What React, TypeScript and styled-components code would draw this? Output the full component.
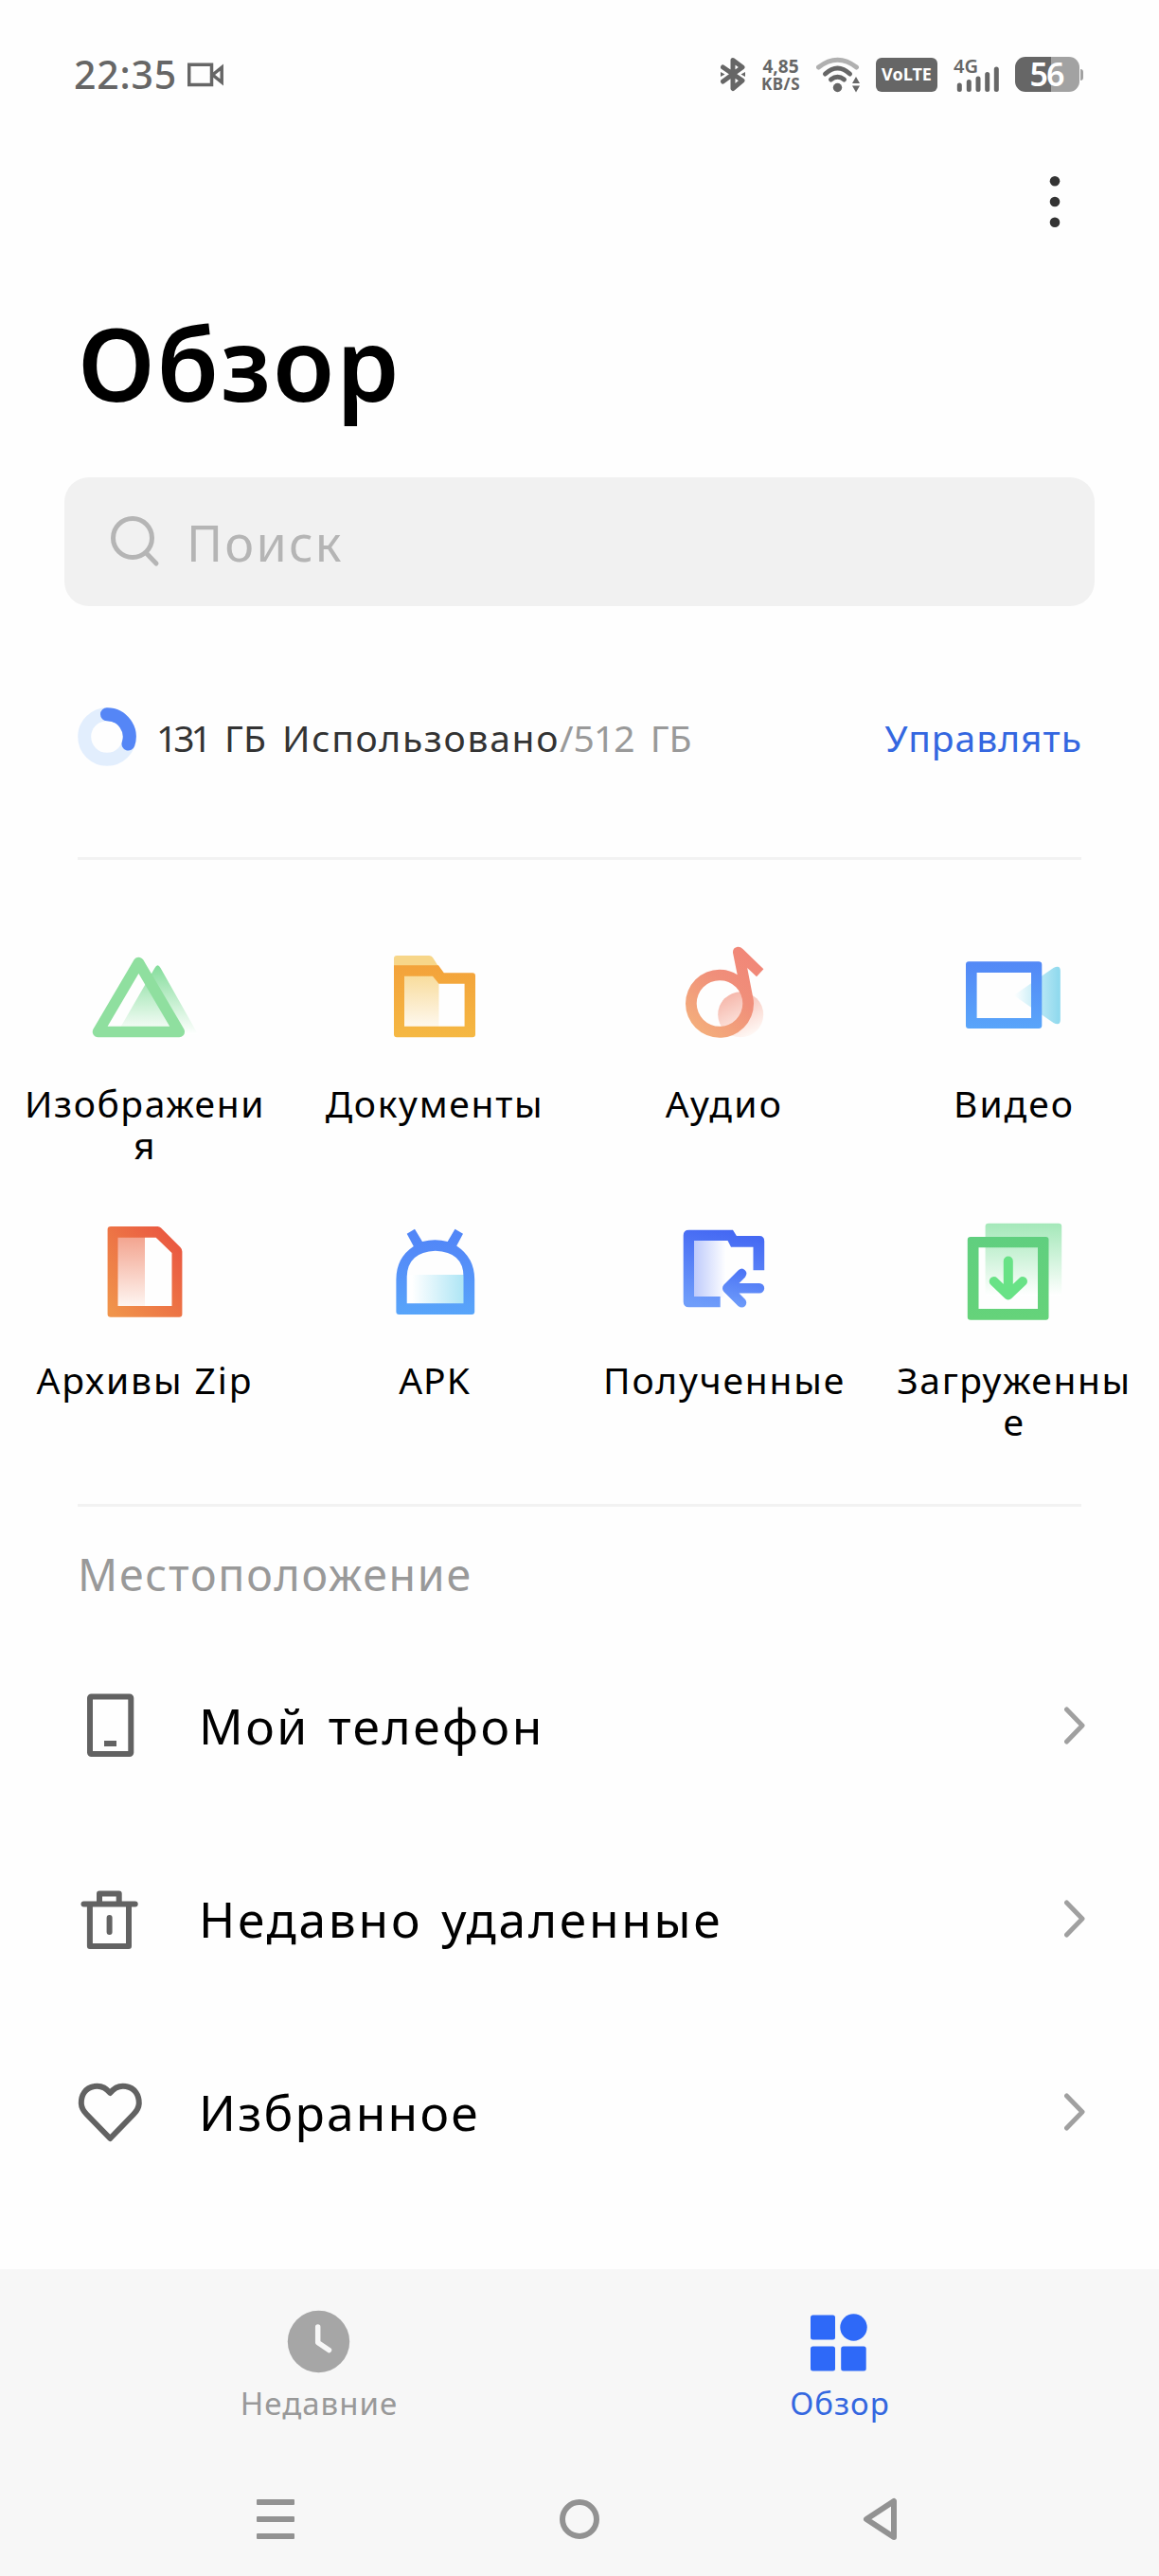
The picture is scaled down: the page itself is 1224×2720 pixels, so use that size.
import type { ReactNode } from "react";
import styled, { createGlobalStyle } from "styled-components";

const categories: { label: string; icon: ReactNode; spacing: number }[] = [
  {
    label: "Изображения",
    spacing: 1.6,
    icon: (
      <>
        <defs>
          <linearGradient id="img-back" x1="0" y1="0" x2="0" y2="1">
            <stop offset="0" stopColor="#84dd9b" />
            <stop offset="1" stopColor="#ffffff" />
          </linearGradient>
        </defs>
        <path d="M70.5 24Q73.5 18.500 76.500 24L116 94H30Z" fill="url(#img-back)" />
        <path
          d="M53.400 18.500L10.500 91.500H96.300Z"
          fill="none"
          stroke="#8fdf9f"
          strokeWidth="11.500"
          strokeLinejoin="round"
        />
      </>
    ),
  },
  {
    label: "Документы",
    spacing: 1.7,
    icon: (
      <>
        <defs>
          <linearGradient id="doc-main" x1="0" y1="0" x2="0" y2="1">
            <stop offset="0" stopColor="#f3a23a" />
            <stop offset="1" stopColor="#f5b843" />
          </linearGradient>
          <linearGradient id="doc-fill" x1="0" y1="0" x2="0" y2="1">
            <stop offset="0" stopColor="#f8dc9c" />
            <stop offset="1" stopColor="#fef8ee" />
          </linearGradient>
        </defs>
        <path d="M17 24V14Q17 11 20 11H54Q56.500 11 58 13L65 24Z" fill="#f7d689" />
        <path d="M28 32H58L64.500 41V86H28Z" fill="url(#doc-fill)" />
        <path
          d="M17 21.300H64L69.800 29.300H100Q103 29.300 103 32.300V94.300Q103 97.300 100 97.300H20Q17 97.300 17 94.300ZM28 32.700V85.700H91.600V40.700H64.300L58 32.700Z"
          fill="url(#doc-main)"
          fillRule="evenodd"
        />
      </>
    ),
  },
  {
    label: "Аудио",
    spacing: 2.3,
    icon: (
      <>
        <defs>
          <linearGradient
            id="audio-main"
            gradientUnits="userSpaceOnUse"
            x1="90"
            y1="15"
            x2="25"
            y2="90"
          >
            <stop offset="0" stopColor="#f18778" />
            <stop offset="0.4" stopColor="#f08f7a" />
            <stop offset="1" stopColor="#f4b07c" />
          </linearGradient>
          <linearGradient id="audio-dot" x1="0.200" y1="0" x2="0.700" y2="1">
            <stop offset="0" stopColor="#f5b3a6" />
            <stop offset="1" stopColor="#fffaf7" />
          </linearGradient>
        </defs>
        <circle cx="77.200" cy="73.300" r="24" fill="url(#audio-dot)" />
        <path
          d="M55 25.700A36 36 0 0 1 73.700 31.300L69 8Q68.600 2.500 74 1.700Q77 1.500 79.500 4L101.400 25.300L94 33.300L84.200 24L90 54Q91 58 91 61.500A36 36 0 1 1 55 25.700ZM55 37.200A24.300 24.300 0 1 0 55 85.800A24.300 24.300 0 1 0 55 37.200Z"
          fill="url(#audio-main)"
          fillRule="evenodd"
        />
      </>
    ),
  },
  {
    label: "Видео",
    spacing: 2,
    icon: (
      <>
        <defs>
          <linearGradient id="video-main" x1="0" y1="0" x2="0" y2="1">
            <stop offset="0" stopColor="#5388f6" />
            <stop offset="1" stopColor="#59a5fa" />
          </linearGradient>
          <linearGradient id="video-lens" x1="0" y1="0" x2="1" y2="0">
            <stop offset="0" stopColor="#ffffff" />
            <stop offset="0.500" stopColor="#c0ebf6" />
            <stop offset="1" stopColor="#8dd8ed" />
          </linearGradient>
        </defs>
        <path
          d="M59.600 53L101.500 24Q108.800 20.500 108.800 27V79Q108.800 85.500 101.500 82Z"
          fill="url(#video-lens)"
        />
        <path
          d="M12 17.300H86Q89.300 17.300 89.300 20.500V85Q89.300 88 86 88H12Q9 88 9 85V20.500Q9 17.300 12 17.300ZM20.600 29V77H78V29Z"
          fill="url(#video-main)"
          fillRule="evenodd"
        />
      </>
    ),
  },
  {
    label: "Архивы Zip",
    spacing: 1.9,
    icon: (
      <>
        <defs>
          <linearGradient id="zip-main" x1="0.900" y1="0.200" x2="0.100" y2="1">
            <stop offset="0" stopColor="#ea5a41" />
            <stop offset="1" stopColor="#f0944b" />
          </linearGradient>
          <linearGradient id="zip-fill" x1="0" y1="0" x2="0" y2="1">
            <stop offset="0" stopColor="#f3a48f" />
            <stop offset="1" stopColor="#fef6f2" />
          </linearGradient>
        </defs>
        <path d="M31 16H60V90H31Z" fill="url(#zip-fill)" />
        <path
          d="M24 5H73.500Q75.500 5 77 6.500L97.500 27Q99.400 29 99.400 31.500V97.500Q99.400 100.700 96.200 100.700H24Q20.600 100.700 20.600 97.500V8Q20.600 5 24 5ZM31.500 16.700V89H88.500V33L71.700 16.700Z"
          fill="url(#zip-main)"
          fillRule="evenodd"
        />
      </>
    ),
  },
  {
    label: "APK",
    spacing: 1,
    icon: (
      <>
        <defs>
          <linearGradient id="apk-main" x1="0" y1="0" x2="0" y2="1">
            <stop offset="0" stopColor="#5085f7" />
            <stop offset="0.300" stopColor="#548bf8" />
            <stop offset="1" stopColor="#58a5fa" />
          </linearGradient>
          <linearGradient id="apk-fill" x1="0" y1="0" x2="1" y2="0">
            <stop offset="0.100" stopColor="#ffffff" />
            <stop offset="1" stopColor="#ade5f5" />
          </linearGradient>
        </defs>
        <path d="M30 56H91V87H30Z" fill="url(#apk-fill)" />
        <path
          d="M39 7.700L30.700 12.700L37.800 26Q19.400 38 19.400 61V95Q19.400 98 22.400 98H99.200Q102.200 98 102.200 95V61Q102.200 38 83.200 25.500L90 12.700L81.500 7.700L73.700 21Q60.500 17.500 47 21ZM60.800 30.700Q90.500 32 90.500 58V86.300H30.700V58Q31.500 32 60.800 30.700Z"
          fill="url(#apk-main)"
          fillRule="evenodd"
        />
      </>
    ),
  },
  {
    label: "Полученные",
    spacing: 1.8,
    icon: (
      <>
        <defs>
          <linearGradient
            id="inbox-main"
            gradientUnits="userSpaceOnUse"
            x1="60"
            y1="8"
            x2="45"
            y2="90"
          >
            <stop offset="0" stopColor="#4468f3" />
            <stop offset="1" stopColor="#6f9dfa" />
          </linearGradient>
          <linearGradient id="inbox-arrow" x1="0.500" y1="0" x2="0.300" y2="1">
            <stop offset="0" stopColor="#4a72f5" />
            <stop offset="1" stopColor="#6f9dfa" />
          </linearGradient>
          <linearGradient id="inbox-fill" x1="0" y1="0" x2="1" y2="0">
            <stop offset="0" stopColor="#bcc9fb" />
            <stop offset="1" stopColor="#ffffff" />
          </linearGradient>
        </defs>
        <path d="M27 19H62V80H27Z" fill="url(#inbox-fill)" />
        <path
          d="M22.500 8.700H69L72.900 15H97Q102.200 15 102.200 20.500V51.300H90.500V26.700H67L63.500 20H28V79H55.700V90.300H22.500Q16.700 90.300 16.700 84.500V14.500Q16.700 8.700 22.500 8.700Z"
          fill="url(#inbox-main)"
        />
        <path
          d="M78.800 49.500Q82.500 50.500 83.400 54Q83.500 56.500 82 58.500L75.500 65H97A5.200 5.200 0 0 1 97 75.400H75.500L82 82Q84.500 85.500 82 89Q78.500 92 74.500 89L59.500 74Q56.500 70.200 59.500 66.500L74.500 51.500Q76.500 49.500 78.800 49.500Z"
          fill="url(#inbox-arrow)"
        />
      </>
    ),
  },
  {
    label: "Загруженные",
    spacing: 1.6,
    icon: (
      <>
        <defs>
          <linearGradient id="dl-back" x1="0" y1="0" x2="0" y2="1">
            <stop offset="0" stopColor="#a4e8b9" />
            <stop offset="1" stopColor="#ffffff" />
          </linearGradient>
          <linearGradient id="dl-main" x1="0" y1="0" x2="0" y2="1">
            <stop offset="0" stopColor="#60cf7f" />
            <stop offset="1" stopColor="#65d37a" />
          </linearGradient>
        </defs>
        <path
          d="M29.600 78V5Q29.600 1.700 33 1.700H107Q110.200 1.700 110.200 5V78Z"
          fill="url(#dl-back)"
        />
        <path
          d="M14 16H93.500Q96.500 16 96.500 19V100.700Q96.500 103.700 93.500 103.700H14Q10.800 103.700 10.800 100.700V19Q10.800 16 14 16ZM22.500 27.300V92H85V27.300Z"
          fill="url(#dl-main)"
          fillRule="evenodd"
        />
        <path
          d="M53.800 41.500V75M38.700 63L53.800 77.500L69 63"
          fill="none"
          stroke="#68e286"
          strokeWidth="10"
          strokeLinecap="round"
          strokeLinejoin="round"
        />
      </>
    ),
  },
];

// every icon is drawn in a 68x70 box
const locations = [
  {
    label: "Мой телефон",
    spacing: 2.5,
    icon: (
      <>
        <rect x="13" y="4.500" width="43.300" height="60.500" rx="1.500" />
        <path d="M28 54H41" />
      </>
    ),
  },
  {
    label: "Недавно удаленные",
    spacing: 2.7,
    icon: (
      <>
        <path d="M6.500 19.400H60.700" strokeLinecap="round" />
        <path d="M23 19V8.600H43.700V19" />
        <path d="M12.900 20V64H54V20" />
        <path d="M33.600 34V49" strokeLinecap="round" />
      </>
    ),
  },
  {
    label: "Избранное",
    spacing: 2.2,
    icon: (
      <path d="M34.300 15C29.500 9 23 7 17.500 8C8 9.500 3.500 17.500 3.800 26C4 31 6.500 34.500 9.500 37.500L34.300 63L59 37.500C62 34.500 64.500 31 64.800 26C65 17.500 60.500 9.500 51 8C45.500 7 39 9 34.300 15Z" />
    ),
  },
];

const App = () => {
  return (
    <Screen>
      <GlobalStyle />
      <StatusBar>
        <Clock>22:35</Clock>
        <svg width="40" height="26" viewBox="0 0 40 26" fill="none" stroke="#666" strokeWidth="3.500">
          <path d="M1.700 2.200H25.500V23.500H1.700ZM26.500 13L36.200 5.200V20.800Z" />
        </svg>
        <StatusIcons>
          <svg width="26" height="37" viewBox="0 0 26 37" fill="none" stroke="#666">
            <path
              d="M2.500 11L23 25L13 33.500V3.500L23 11L2.500 26"
              strokeWidth="5"
              strokeLinecap="round"
              strokeLinejoin="round"
            />
            <path d="M0 16L4.500 18.500L0 21ZM26 16L21.500 18.500L26 21Z" fill="#666" stroke="none" />
          </svg>
          <NetSpeed>
            <span>4,85</span>
            <small>KB/S</small>
          </NetSpeed>
          <svg width="46" height="38" viewBox="0 0 46 38" fill="none" strokeLinecap="round">
            <path d="M2.500 11Q22.500-4.500 42.500 11" stroke="#b0b0b0" strokeWidth="5" />
            <path d="M9.500 18Q22.500 6 35.500 18" stroke="#666" strokeWidth="5" />
            <path d="M15.500 24Q22.500 18.500 29.500 24" stroke="#666" strokeWidth="5" />
            <circle cx="22.500" cy="32.500" r="4.700" fill="#666" />
            <path d="M42 21L46 28H38ZM42 37.500L46 30.500H38Z" fill="#666" />
          </svg>
          <Volte>VoLTE</Volte>
          <svg width="48" height="50" viewBox="0 -6 48 50">
            <SignalText x="0" y="17">
              4G
            </SignalText>
            <path
              d="M6.300 30V34.500M16.300 26.500V34.500M26 23V34.500M35.700 18.500V34.500M45.300 13V34.500"
              stroke="#666"
              strokeWidth="5"
              strokeLinecap="round"
            />
          </svg>
          <Battery>
            <BatteryBody>56</BatteryBody>
            <BatteryTip />
          </Battery>
        </StatusIcons>
      </StatusBar>

      <MenuBar>
        <svg width="12" height="56" viewBox="0 0 12 56" fill="#333">
          <circle cx="6" cy="6.300" r="5.300" />
          <circle cx="6" cy="28" r="5.300" />
          <circle cx="6" cy="49.700" r="5.300" />
        </svg>
      </MenuBar>

      <Title>Обзор</Title>

      <Search>
        <svg
          width="52"
          height="54"
          viewBox="0 0 52 54"
          fill="none"
          stroke="#b5b5b5"
          strokeWidth="5"
          strokeLinecap="round"
        >
          <circle cx="23" cy="23" r="20.500" />
          <path d="M37.500 39L48 50" />
        </svg>
        <SearchText>Поиск</SearchText>
      </Search>

      <Storage>
        <svg width="62" height="62" viewBox="0 0 62 62" fill="none" strokeWidth="14">
          <circle cx="31" cy="31" r="23.800" stroke="#e2eefd" />
          <path d="M31 7.200A23.800 23.800 0 0 1 53.500 38.500" stroke="#5586f6" strokeLinecap="round" />
        </svg>
        <Usage>
          <Digits $spacing={-4}>131</Digits> ГБ <Used>Использовано</Used>
          <Total>
            /<Digits $spacing={-1}>512</Digits> ГБ
          </Total>
        </Usage>
        <Manage>Управлять</Manage>
      </Storage>

      <Divider />

      <Grid>
        {categories.map(({ label, icon, spacing }) => (
          <Category key={label}>
            <svg width="120" height="104" viewBox="0 0 120 104">
              {icon}
            </svg>
            <CategoryLabel $spacing={spacing}>{label}</CategoryLabel>
          </Category>
        ))}
      </Grid>

      <Divider />

      <SectionTitle>Местоположение</SectionTitle>

      {locations.map(({ label, icon, spacing }) => (
        <Location key={label}>
          <svg
            width="68"
            height="70"
            viewBox="0 0 68 70"
            fill="none"
            stroke="#626262"
            strokeWidth="6"
            strokeLinejoin="round"
          >
            {icon}
          </svg>
          <LocationName $spacing={spacing}>{label}</LocationName>
          <svg
            width="22"
            height="40"
            viewBox="0 0 22 40"
            fill="none"
            stroke="#a0a0a0"
            strokeWidth="5"
            strokeLinecap="round"
            strokeLinejoin="round"
          >
            <path d="M2.500 3L19 20L2.500 37" />
          </svg>
        </Location>
      ))}

      <Footer>
        <Tabs>
          <Tab>
            <svg width="70" height="68" viewBox="-1 -0.500 70 68">
              <circle cx="33.500" cy="34" r="32.700" fill="#a6a6a6" />
              <path
                d="M32.700 18.500V35L44.500 43"
                fill="none"
                stroke="#f7f7f7"
                strokeWidth="5.500"
                strokeLinecap="round"
                strokeLinejoin="round"
              />
            </svg>
            <TabLabel>Недавние</TabLabel>
          </Tab>
          <Tab>
            <svg width="70" height="68" viewBox="-1 -0.500 70 68" fill="#2e69f8">
              <rect x="3" y="6" width="26" height="26" rx="2.500" />
              <circle cx="48.500" cy="19" r="14.200" />
              <rect x="3" y="39" width="26" height="26" rx="2.500" />
              <rect x="35.200" y="39" width="26.500" height="26" rx="2.500" />
            </svg>
            <TabLabel $active>Обзор</TabLabel>
          </Tab>
        </Tabs>
        <SystemNav>
          <svg width="42" height="42" viewBox="0 0 42 42" fill="#929292">
            <rect x="0" y="0" width="40" height="6" rx="1" />
            <rect x="0" y="18" width="40" height="6" rx="1" />
            <rect x="0" y="36" width="40" height="6" rx="1" />
          </svg>
          <svg width="42" height="42" viewBox="0 0 42 42" fill="none" stroke="#929292" strokeWidth="6">
            <circle cx="21" cy="21" r="18" />
          </svg>
          <svg
            width="42"
            height="46"
            viewBox="0 0 42 46"
            fill="none"
            stroke="#929292"
            strokeWidth="6"
            strokeLinejoin="round"
          >
            <path d="M33 4V42L4 23Z" />
          </svg>
        </SystemNav>
      </Footer>
    </Screen>
  );
};

const GlobalStyle = createGlobalStyle`
  body {
    margin: 0;
    background: #fefefe;
  }

  svg {
    display: block;
    flex-shrink: 0;
  }
`;

const Screen = styled.div`
  display: flex;
  flex-direction: column;
  width: 1224px;
  height: 2720px;
  background: #fefefe;
  color: #000;
  font-family: "Noto Sans", "Open Sans", sans-serif;
  white-space: nowrap;
`;

const StatusBar = styled.div`
  display: flex;
  align-items: center;
  height: 157px;
  padding: 0 80px 0 78px;
  color: #666;
`;

const Clock = styled.span`
  width: 120px;
  margin-top: -2px;
  font-size: 41px;
  font-weight: 500;
  letter-spacing: 0.8px;
`;

const StatusIcons = styled.div`
  display: flex;
  align-items: center;
  gap: 17px;
  margin-left: auto;
`;

const NetSpeed = styled.div`
  display: flex;
  flex-direction: column;
  align-items: center;
  width: 41px;
  font-size: 19px;
  font-weight: 700;
  line-height: 19px;

  small {
    font-size: 17px;
    line-height: 17px;
    letter-spacing: 0.5px;
  }
`;

const Volte = styled.span`
  width: 65px;
  height: 36px;
  border-radius: 6px;
  background: #666;
  color: #fff;
  font-size: 18px;
  font-weight: 700;
  line-height: 35px;
  text-align: center;
`;

const SignalText = styled.text`
  fill: #666;
  font-size: 20px;
  font-weight: 600;
`;

const Battery = styled.div`
  display: flex;
  align-items: center;
  gap: 1px;
`;

const BatteryBody = styled.div`
  width: 68px;
  height: 37px;
  border-radius: 11px;
  background: linear-gradient(90deg, #666 56%, #a2a2a2 56%);
  color: #fff;
  font-size: 34px;
  font-weight: 600;
  line-height: 36px;
  letter-spacing: -2px;
  text-indent: -2px;
  text-align: center;
`;

const BatteryTip = styled.div`
  width: 3px;
  height: 12px;
  border-radius: 0 3px 3px 0;
  background: #a2a2a2;
`;

const MenuBar = styled.div`
  display: flex;
  align-items: center;
  justify-content: flex-end;
  height: 112px;
  padding-right: 104px;
`;

const Title = styled.h1`
  margin: 54px 0 0 82px;
  font-size: 106px;
  font-weight: 600;
  line-height: 120px;
  letter-spacing: 2px;
`;

const Search = styled.div`
  display: flex;
  align-items: center;
  height: 136px;
  margin: 61px 68px 0;
  padding-left: 49px;
  border-radius: 26px;
  background: #f1f1f1;
`;

const SearchText = styled.span`
  margin-left: 28px;
  color: #b5b5b5;
  font-size: 52px;
  letter-spacing: 2.2px;
`;

const Storage = styled.div`
  display: flex;
  align-items: center;
  height: 62px;
  margin: 107px 81px 0 82px;
`;

const Usage = styled.span`
  margin-left: 21px;
  color: #333;
  font-size: 39px;
  word-spacing: 7px;
`;

const Digits = styled.span<{ $spacing: number }>`
  letter-spacing: ${({ $spacing }) => $spacing}px;
`;

const Used = styled.span`
  letter-spacing: 1.7px;
`;

const Total = styled.span`
  color: #999;
`;

const Manage = styled.span`
  margin-left: auto;
  color: #3467e0;
  font-size: 39px;
  letter-spacing: 1px;
`;

const Divider = styled.div`
  height: 3px;
  margin: 96px 82px 0;
  background: #f2f2f2;
`;

const Grid = styled.div`
  display: grid;
  grid-template-columns: repeat(4, 306px);
  grid-auto-rows: 292px;
  padding-top: 90px;

  & + ${Divider} {
    margin-top: 6px;
  }
`;

const Category = styled.div`
  display: flex;
  flex-direction: column;
  align-items: center;
`;

const CategoryLabel = styled.span<{ $spacing: number }>`
  width: 268px;
  margin-top: 41px;
  font-size: 39px;
  line-height: 44px;
  letter-spacing: ${({ $spacing }) => $spacing}px;
  text-align: center;
  white-space: normal;
  overflow-wrap: anywhere;
`;

const SectionTitle = styled.h2`
  margin: 41px 82px 28px;
  color: #999;
  font-size: 46.5px;
  font-weight: 400;
  line-height: 60px;
  letter-spacing: 1.75px;
`;

const Location = styled.div`
  display: flex;
  align-items: center;
  height: 204px;
  padding: 0 78px 0 82px;
`;

const LocationName = styled.span<{ $spacing: number }>`
  flex: 1;
  margin-left: 60px;
  font-size: 51.5px;
  letter-spacing: ${({ $spacing }) => $spacing}px;
  word-spacing: 4px;
`;

const Footer = styled.div`
  height: 324px;
  margin-top: auto;
  background: #f7f7f7;
`;

const Tabs = styled.div`
  display: grid;
  grid-template-columns: repeat(2, 550px);
  justify-content: center;
  height: 204px;
`;

const Tab = styled.div`
  display: flex;
  flex-direction: column;
  align-items: center;
  padding-top: 42px;
`;

const TabLabel = styled.span<{ $active?: boolean }>`
  margin-top: 10px;
  color: ${({ $active }) => ($active ? "#3467e0" : "#999")};
  font-size: 33px;
  line-height: 44px;
  letter-spacing: 1px;
`;

const SystemNav = styled.div`
  display: grid;
  grid-template-columns: repeat(3, 320px);
  align-items: center;
  justify-content: center;
  justify-items: center;
  height: 120px;
`;

export default App;
